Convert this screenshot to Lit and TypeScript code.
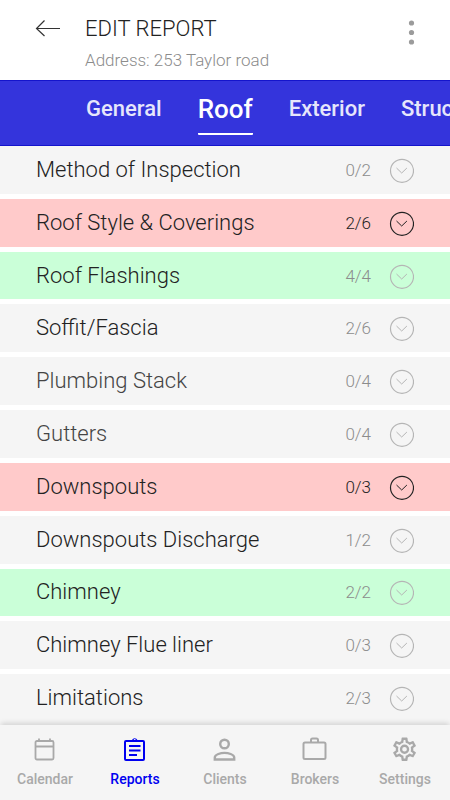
import { LitElement, html, css, svg } from "lit";
import { customElement, property, state } from "lit/decorators.js";
import { classMap } from "lit/directives/class-map.js";

interface Section {
  name: string;
  count: string;
  tone?: "alert" | "done";
  soft?: boolean;
}

const sections: Section[] = [
  { name: "Method of Inspection", count: "0/2" },
  { name: "Roof Style & Coverings", count: "2/6", tone: "alert" },
  { name: "Roof Flashings", count: "4/4", tone: "done" },
  { name: "Soffit/Fascia", count: "2/6" },
  { name: "Plumbing Stack", count: "0/4", soft: true },
  { name: "Gutters", count: "0/4", soft: true },
  { name: "Downspouts", count: "0/3", tone: "alert" },
  { name: "Downspouts Discharge", count: "1/2" },
  { name: "Chimney", count: "2/2", tone: "done" },
  { name: "Chimney Flue liner", count: "0/3" },
  { name: "Limitations", count: "2/3" },
];

const gear =
  "M19.43 12.98c.04-.32.07-.64.07-.98s-.03-.66-.07-.98l2.11-1.65c.19-.15.24-.42.12-.64l-2-3.46c-.12-.22-.39-.3-.61-.22l-2.49 1c-.52-.4-1.08-.73-1.69-.98l-.38-2.65A.49.49 0 0 0 14 2h-4c-.25 0-.46.18-.49.42l-.38 2.65c-.61.25-1.17.59-1.69.98l-2.49-1c-.23-.09-.49 0-.61.22l-2 3.46c-.13.22-.07.49.12.64l2.11 1.65c-.04.32-.07.65-.07.98s.03.66.07.98l-2.11 1.65c-.19.15-.24.42-.12.64l2 3.46c.12.22.39.3.61.22l2.49-1c.52.4 1.08.73 1.69.98l.38 2.65c.03.24.24.42.49.42h4c.25 0 .46-.18.49-.42l.38-2.65c.61-.25 1.17-.59 1.69-.98l2.49 1c.23.09.49 0 .61-.22l2-3.46c.12-.22.07-.49-.12-.64l-2.11-1.65zm-1.98-1.71c.04.31.05.52.05.73s-.02.43-.05.73l-.14 1.13.89.7 1.08.84-.7 1.21-1.27-.51-1.04-.42-.9.68c-.43.32-.84.56-1.25.73l-1.06.43-.16 1.13-.2 1.35h-1.4l-.19-1.35-.16-1.13-1.06-.43c-.43-.18-.83-.41-1.23-.71l-.91-.7-1.06.43-1.27.51-.7-1.21 1.08-.84.89-.7-.14-1.13c-.03-.31-.05-.54-.05-.74s.02-.43.05-.73l.14-1.13-.89-.7-1.08-.84.7-1.21 1.27.51 1.04.42.9-.68c.43-.32.84-.56 1.25-.73l1.06-.43.16-1.13.2-1.35h1.39l.19 1.35.16 1.13 1.06.43c.43.18.83.41 1.23.71l.91.7 1.06-.43 1.27-.51.7 1.21-1.07.85-.89.7.14 1.13zM12 8a4 4 0 1 0 0 8 4 4 0 0 0 0-8zm0 6a2 2 0 1 1 0-4 2 2 0 0 1 0 4z";

const navItems = [
  {
    name: "Calendar",
    icon: svg`<g fill="none" stroke="currentColor" stroke-width="1.8"><rect x="3.5" y="4" width="18" height="18.500" rx="1.4"/><path d="M3.5 9.500h18M7 1.500V4M18 1.500V4"/></g>`,
  },
  {
    name: "Reports",
    icon: svg`<g fill="none" stroke="currentColor" stroke-width="2"><rect x="3" y="4" width="19" height="19" rx="1"/><path d="M7 9h11.500M7 13.500h11.500M7 18h8"/></g><path fill="currentColor" fill-rule="evenodd" d="M8.500 4.500V3H10a2.900 2.900 0 0 1 5.400 0h1.500v1.500zM12.700 2a1 1 0 1 0 0 2 1 1 0 0 0 0-2z"/>`,
  },
  {
    name: "Clients",
    icon: svg`<g fill="none" stroke="currentColor" stroke-width="2.400"><circle cx="12.500" cy="7" r="4.300"/><path d="M2.800 22.500v-2c0-3.200 6.200-4.600 9.700-4.600s9.700 1.400 9.700 4.600v2z"/></g>`,
  },
  {
    name: "Brokers",
    icon: svg`<g fill="none" stroke="currentColor" stroke-width="2"><rect x="1.500" y="5.500" width="22" height="16.500" rx="1.500"/><path d="M9 5.500V3q0-1.500 1.500-1.500h4q1.500 0 1.500 1.500v2.500"/></g>`,
  },
  {
    name: "Settings",
    icon: svg`<path fill="currentColor" transform="translate(-1.500 -1.800) scale(1.170)" d=${gear}/>`,
  },
];

@customElement("section-row")
export class SectionRow extends LitElement {
  @property({ attribute: false }) section!: Section;

  static styles = css`
    :host { display: grid; }
    .row {
      display: flex;
      align-items: center;
      width: 100%;
      padding: 0 36px;
      border: 0;
      background: #f5f5f5;
      color: #222;
      font: 300 22px/26px Roboto, sans-serif;
      text-align: left;
    }
    .name { flex: 1; }
    .count { color: #8c8c8c; font-size: 17px; margin-right: 17px; }
    .chevron { width: 26px; height: 26px; color: #b5b5b5; }
    .soft { color: #444; }
    .alert { background: #ffcaca; }
    .alert .count, .alert .chevron { color: #222; }
    .done { background: #caffd8; }
  `;

  render() {
    const { name, count, tone, soft } = this.section;
    return html`
      <button class=${classMap({ row: true, soft: !!soft, alert: tone === "alert", done: tone === "done" })}>
        <span class="name">${name}</span>
        <span class="count">${count}</span>
        <svg class="chevron" viewBox="0 0 26 26" fill="none" stroke="currentColor" stroke-width="1.200" aria-hidden="true">
          <circle cx="14" cy="13.800" r="11.500" />
          <path stroke-width="1" d="M8.500 11l5.200 5 5.200-5" />
        </svg>
      </button>
    `;
  }
}

@customElement("app-root")
export class AppRoot extends LitElement {
  @state() private tab = "Roof";
  @state() private page = "Reports";

  static styles = css`
    :host {
      display: flex;
      flex-direction: column;
      min-height: 100vh;
      background: #fff;
      color: #222;
      font-family: Roboto, sans-serif;
    }
    button { border: 0; padding: 0; background: none; font: inherit; color: inherit; }
    .header {
      display: flex;
      align-items: flex-start;
      padding: 15px 32px 8px 35px;
    }
    .back { width: 26px; height: 26px; margin-right: 24px; }
    .back svg, .more svg { display: block; }
    .heading { flex: 1; }
    .title { margin: 0; font-weight: 300; font-size: 22px; line-height: 28px; }
    .address { margin: 6px 0 0; font-weight: 300; font-size: 17px; line-height: 23px; color: #8c8c8c; }
    .more { width: 12px; height: 34px; color: #9b9b9b; }
    .tabs {
      display: flex;
      align-items: flex-start;
      gap: 36px;
      height: 64px;
      padding-left: 86px;
      overflow: hidden;
      background: #3434dc;
      border-top: 1px solid #1414cc;
      border-bottom: 1px solid #1414cc;
      color: #e6e6fb;
      font-weight: 500;
      font-size: 22px;
    }
    .tab { flex: none; height: 54px; padding-top: 2px; line-height: 52px; border-bottom: 2px solid transparent; box-sizing: border-box; }
    .current { color: #fff; font-size: 26px; border-bottom-color: #fff; border-radius: 1px; }
    .list {
      flex: 1;
      display: grid;
      grid-auto-rows: 1fr;
      gap: 5px;
      margin: 0;
      padding: 0;
      list-style: none;
      border-bottom: 3px solid #f5f5f5;
    }
    .item { display: grid; min-height: 46px; }
    .nav {
      position: relative;
      display: grid;
      grid-template-columns: repeat(5, 1fr);
      height: 75px;
      background: #f5f5f5;
      box-shadow: 0 -3px 5px -1px rgba(0, 0, 0, 0.14);
    }
    .link {
      display: flex;
      flex-direction: column;
      align-items: center;
      gap: 8px;
      padding-top: 12px;
      color: #a9a9a9;
      font-weight: 500;
      font-size: 14px;
      line-height: 18px;
      text-decoration: none;
    }
    .link svg { width: 25px; height: 25px; margin-right: 2px; }
    .active { color: #0000f0; }
  `;

  render() {
    return html`
      <header class="header">
        <button class="back" aria-label="Back">
          <svg width="26" height="26" viewBox="0 0 26 26" fill="none" stroke="#333" stroke-width="1.200">
            <path d="M25 13.500H1.500M9.500 5.500l-8 8 8 7.500" />
          </svg>
        </button>
        <div class="heading">
          <h1 class="title">EDIT REPORT</h1>
          <p class="address">Address: 253 Taylor road</p>
        </div>
        <button class="more" aria-label="More options">
          <svg width="12" height="34" viewBox="0 0 12 34" fill="currentColor">
            <circle cx="5.500" cy="8" r="2.600" /><circle cx="5.500" cy="17.500" r="2.600" /><circle cx="5.500" cy="27" r="2.600" />
          </svg>
        </button>
      </header>
      <nav class="tabs" aria-label="Report sections">
        ${["General", "Roof", "Exterior", "Structure"].map(
          (t) => html`<button class=${classMap({ tab: true, current: t === this.tab })} @click=${() => (this.tab = t)}>${t}</button>`
        )}
      </nav>
      <ul class="list">
        ${sections.map((s) => html`<li class="item"><section-row .section=${s}></section-row></li>`)}
      </ul>
      <nav class="nav" aria-label="Main">
        ${navItems.map(
          (n) => html`<a href="#" class=${classMap({ link: true, active: n.name === this.page })} @click=${() => (this.page = n.name)}>
            <svg viewBox="0 0 25 25" aria-hidden="true">${n.icon}</svg>
            <span>${n.name}</span>
          </a>`
        )}
      </nav>
    `;
  }
}
